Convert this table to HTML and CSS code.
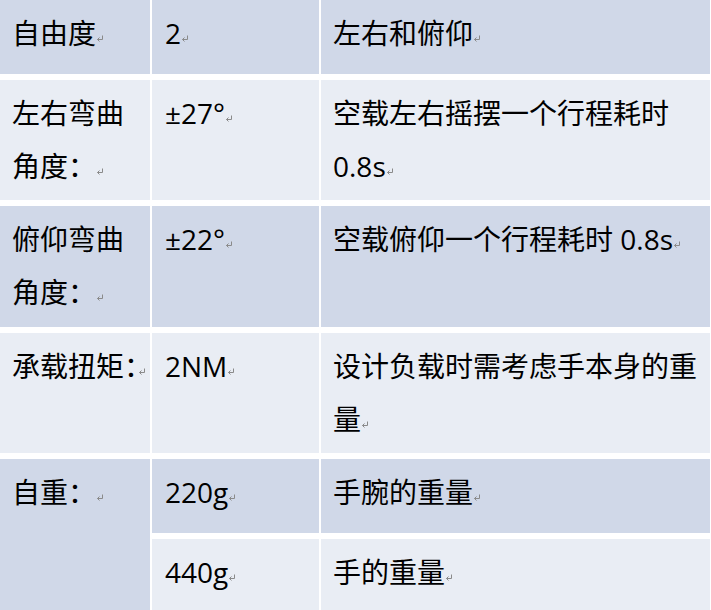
FILE: index.html
```html
<!DOCTYPE html>
<html lang="zh-CN">
<head>
<meta charset="utf-8">
<title>参数表</title>
<link rel="stylesheet" href="styles.css">
</head>
<body>
<div class="spec">
  <div class="cell dark">自由度<svg class="pm" viewBox="0 0 8 7"><path d="M6.5 0.5V4.5H1.5M3.5 2.5L1.5 4.5L3.5 6.5"/></svg></div>
  <div class="cell dark num">2<svg class="pm" viewBox="0 0 8 7"><path d="M6.5 0.5V4.5H1.5M3.5 2.5L1.5 4.5L3.5 6.5"/></svg></div>
  <div class="cell dark">左右和俯仰<svg class="pm" viewBox="0 0 8 7"><path d="M6.5 0.5V4.5H1.5M3.5 2.5L1.5 4.5L3.5 6.5"/></svg></div>

  <div class="cell light">左右弯曲<br>角度：<svg class="pm" viewBox="0 0 8 7"><path d="M6.5 0.5V4.5H1.5M3.5 2.5L1.5 4.5L3.5 6.5"/></svg></div>
  <div class="cell light num">±27°<svg class="pm" viewBox="0 0 8 7"><path d="M6.5 0.5V4.5H1.5M3.5 2.5L1.5 4.5L3.5 6.5"/></svg></div>
  <div class="cell light">空载左右摇摆一个行程耗时<br>0.8s<svg class="pm" viewBox="0 0 8 7"><path d="M6.5 0.5V4.5H1.5M3.5 2.5L1.5 4.5L3.5 6.5"/></svg></div>

  <div class="cell dark">俯仰弯曲<br>角度：<svg class="pm" viewBox="0 0 8 7"><path d="M6.5 0.5V4.5H1.5M3.5 2.5L1.5 4.5L3.5 6.5"/></svg></div>
  <div class="cell dark num">±22°<svg class="pm" viewBox="0 0 8 7"><path d="M6.5 0.5V4.5H1.5M3.5 2.5L1.5 4.5L3.5 6.5"/></svg></div>
  <div class="cell dark">空载俯仰一个行程耗时 0.8s<svg class="pm" viewBox="0 0 8 7"><path d="M6.5 0.5V4.5H1.5M3.5 2.5L1.5 4.5L3.5 6.5"/></svg></div>

  <div class="cell light">承载扭矩<span class="half">：</span><svg class="pm" viewBox="0 0 8 7"><path d="M6.5 0.5V4.5H1.5M3.5 2.5L1.5 4.5L3.5 6.5"/></svg></div>
  <div class="cell light num">2NM<svg class="pm" viewBox="0 0 8 7"><path d="M6.5 0.5V4.5H1.5M3.5 2.5L1.5 4.5L3.5 6.5"/></svg></div>
  <div class="cell light">设计负载时需考虑手本身的重<br>量<svg class="pm" viewBox="0 0 8 7"><path d="M6.5 0.5V4.5H1.5M3.5 2.5L1.5 4.5L3.5 6.5"/></svg></div>

  <div class="cell dark span2">自重：<svg class="pm" viewBox="0 0 8 7"><path d="M6.5 0.5V4.5H1.5M3.5 2.5L1.5 4.5L3.5 6.5"/></svg></div>
  <div class="cell dark num">220g<svg class="pm" viewBox="0 0 8 7"><path d="M6.5 0.5V4.5H1.5M3.5 2.5L1.5 4.5L3.5 6.5"/></svg></div>
  <div class="cell dark">手腕的重量<svg class="pm" viewBox="0 0 8 7"><path d="M6.5 0.5V4.5H1.5M3.5 2.5L1.5 4.5L3.5 6.5"/></svg></div>

  <div class="cell light num">440g<svg class="pm" viewBox="0 0 8 7"><path d="M6.5 0.5V4.5H1.5M3.5 2.5L1.5 4.5L3.5 6.5"/></svg></div>
  <div class="cell light">手的重量<svg class="pm" viewBox="0 0 8 7"><path d="M6.5 0.5V4.5H1.5M3.5 2.5L1.5 4.5L3.5 6.5"/></svg></div>
</div>
</body>
</html>
```
FILE: styles.css
```css
html, body {
  margin: 0;
  padding: 0;
  background: #ffffff;
}

.spec {
  display: grid;
  grid-template-columns: 150px 167px 389px;
  grid-template-rows: 74px 120px 121px 120px 74px 74px;
  column-gap: 2px;
  row-gap: 6px;
  width: 710px;
  font-family: "Open Sans", "Noto Sans CJK SC", sans-serif;
  font-size: 28px;
  line-height: 53px;
  color: #000000;
}

.cell {
  padding: 7px 4px 0 12px;
  white-space: nowrap;
  overflow: visible;
}

.cell.num {
  padding-left: 13px;
}

.dark {
  background: #d0d8e8;
}

.light {
  background: #e9edf4;
}

.span2 {
  grid-row: span 2;
}

.half {
  font-feature-settings: "halt";
}

.pm {
  width: 8px;
  height: 7px;
  vertical-align: 2px;
  fill: none;
  stroke: #8a8a8a;
  stroke-width: 1;
}
```
